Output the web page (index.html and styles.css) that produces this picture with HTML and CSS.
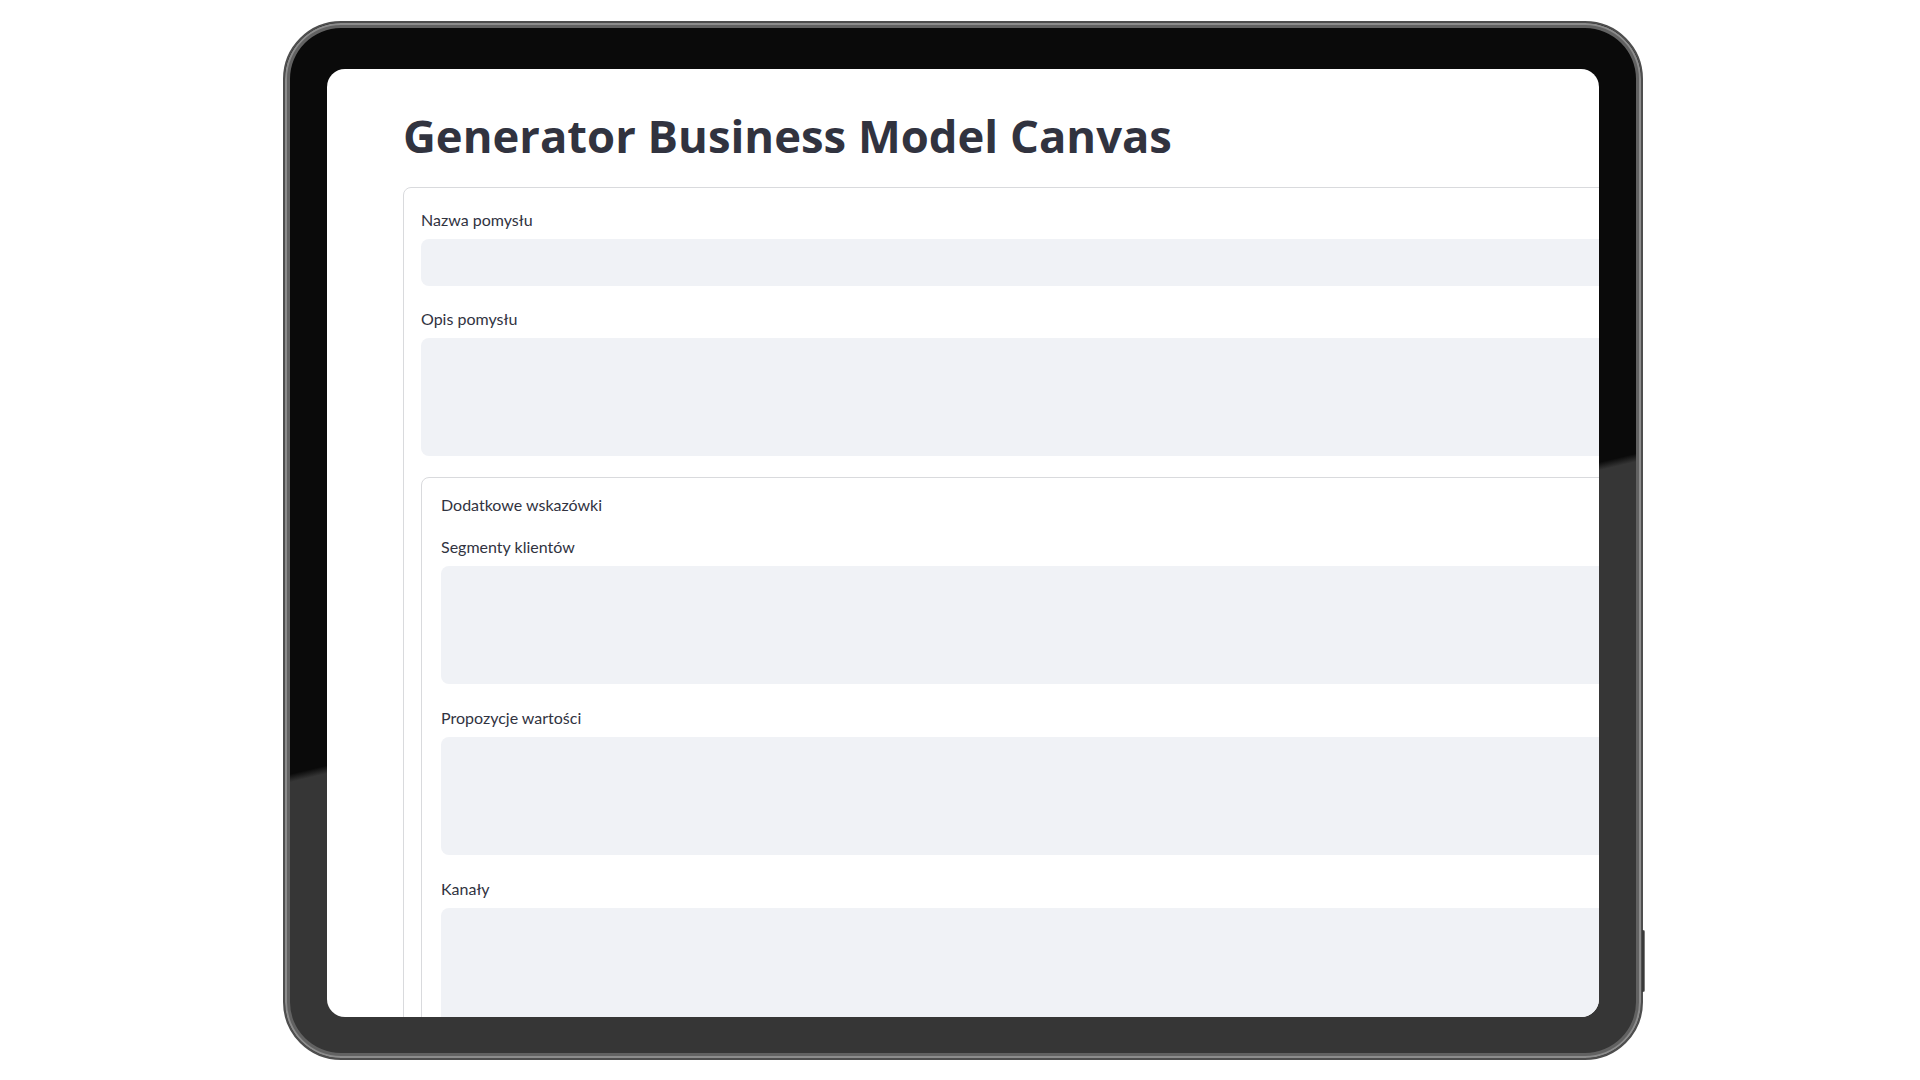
FILE: index.html
```html
<!DOCTYPE html>
<html lang="pl">

<head>
    <meta charset="UTF-8">
    <title>Generator Business Model Canvas</title>
    <link rel="stylesheet" href="styles.css">
</head>

<body>
    <div class="tablet">
        <span class="side-btn"></span>
        <span class="bottom-btn first"></span>
        <span class="bottom-btn second"></span>

        <div class="screen">
            <h1 class="title">Generator Business Model Canvas</h1>

            <form class="bmc-form">
                <div class="field">
                    <label for="name">Nazwa pomysłu</label>
                    <input type="text" id="name" class="text-input">
                </div>
                <div class="field">
                    <label for="desc">Opis pomysłu</label>
                    <textarea id="desc" class="text-area"></textarea>
                </div>

                <div class="expander">
                    <div class="expander-title">Dodatkowe wskazówki</div>
                    <div class="field">
                        <label for="segments">Segmenty klientów</label>
                        <textarea id="segments" class="text-area"></textarea>
                    </div>
                    <div class="field">
                        <label for="value">Propozycje wartości</label>
                        <textarea id="value" class="text-area"></textarea>
                    </div>
                    <div class="field">
                        <label for="channels">Kanały</label>
                        <textarea id="channels" class="text-area"></textarea>
                    </div>
                </div>
            </form>
        </div>
    </div>
</body>

</html>
```

FILE: styles.css
```css
* {
    padding: 0;
    margin: 0;
    box-sizing: border-box;
}

body {
    background: #fff;
    padding: 21px 0 0 283px;
    font-family: Lato, "Noto Sans", sans-serif;
    color: #31333f;
}

/* device frame */
.tablet {
    position: relative;
    width: 1360px;
    height: 1039px;
    padding: 46px 42px 41px 42px;
    border: 2px solid #4e4e4e;
    border-radius: 58px;
    background: linear-gradient(166.6deg, #0a0a0a 55.4%, #363636 56%);
    box-shadow: inset 0 0 0 2px #8c8c8c, inset 0 0 0 5px #626262;
}

.side-btn {
    position: absolute;
    top: 907px;
    right: -4px;
    width: 3px;
    height: 62px;
    background: #3a3a3a;
    border-right: 1px solid #7a7a7a;
    border-radius: 0 2px 2px 0;
}

.bottom-btn {
    position: absolute;
    bottom: -5px;
    width: 51px;
    height: 3px;
    background: #8a8a8a;
    border-radius: 0 0 2px 2px;
}

.bottom-btn.first {
    left: 1152px;
}

.bottom-btn.second {
    left: 1212px;
}

.screen {
    width: 1272px;
    height: 948px;
    background: #fff;
    border-radius: 18px;
    overflow: hidden;
    padding: 39px 0 0 76px;
}

.title {
    font-family: "Open Sans", Lato, sans-serif;
    font-size: 45.4px;
    line-height: 55px;
    font-weight: 700;
    color: #31333f;
    margin-bottom: 24px;
    white-space: nowrap;
}

/* form */
.bmc-form {
    width: 1400px;
    border: 1px solid #d9dadd;
    border-radius: 8px;
    padding: 20px 17px 40px 17px;
    display: flex;
    flex-direction: column;
    gap: 21px;
}

.field>label {
    display: block;
    font-size: 16px;
    line-height: 24px;
    margin-bottom: 7px;
    color: #31333f;
}

.text-input,
.text-area {
    display: block;
    width: 100%;
    border: none;
    outline: none;
    border-radius: 8px;
    background: #f0f2f6;
    font-family: inherit;
}

.text-input {
    height: 47px;
}

.text-area {
    height: 118px;
    resize: none;
}

.expander {
    border: 1px solid #d9dadd;
    border-radius: 8px;
    padding: 15px 19px 40px 19px;
    display: flex;
    flex-direction: column;
    gap: 22px;
}

.expander-title {
    font-size: 16px;
    line-height: 24px;
    margin-bottom: -4px;
    color: #31333f;
}
```
